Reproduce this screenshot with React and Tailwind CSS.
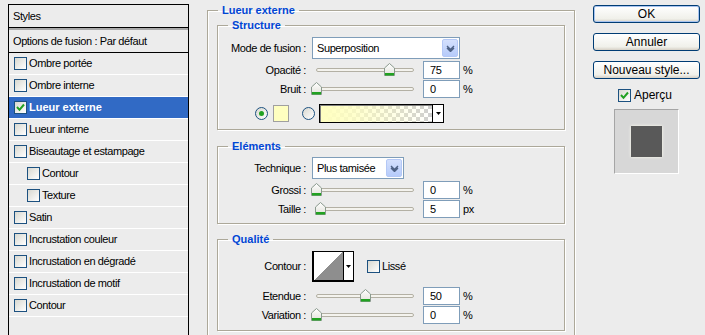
import React from "react";

const styleRows = [
  { label: "Ombre portée" },
  { label: "Ombre interne" },
  { label: "Lueur externe", on: true },
  { label: "Lueur interne" },
  { label: "Biseautage et estampage" },
  { label: "Contour", sub: true },
  { label: "Texture", sub: true },
  { label: "Satin" },
  { label: "Incrustation couleur" },
  { label: "Incrustation en dégradé" },
  { label: "Incrustation de motif" },
  { label: "Contour" },
];

function Check({ checked }) {
  return (
    <span className="flex h-[13px] w-[13px] shrink-0 items-center justify-center border border-[#1c5180] bg-[linear-gradient(135deg,#d8d8d0,#ffffff)]">
      {checked && (
        <svg width="9" height="9" viewBox="0 0 9 9">
          <path d="M1 4 L3.5 6.8 L8 1.5" fill="none" stroke="#21a121" strokeWidth="2" />
        </svg>
      )}
    </span>
  );
}

function Radio({ checked }) {
  return (
    <span className="flex h-[13px] w-[13px] shrink-0 items-center justify-center rounded-full border border-[#1c5180] bg-[linear-gradient(135deg,#d8d8d0,#ffffff)]">
      {checked && <span className="h-[5px] w-[5px] rounded-full bg-[#21a121]" />}
    </span>
  );
}

function Chevron() {
  return (
    <span className="flex h-full w-[16px] items-center justify-center rounded-[2px] border border-[#b4c8f6] bg-[linear-gradient(#d4e0fd,#b6cbfa)]">
      <svg width="9" height="7" viewBox="0 0 9 7">
        <path d="M1 1 L4.5 4.5 L8 1 M1 3 L4.5 6.5 L8 3" fill="none" stroke="#4d6185" strokeWidth="1.4" />
      </svg>
    </span>
  );
}

function Select({ value, w }) {
  return (
    <div className={`flex h-[22px] items-center border border-[#7f9db9] bg-white p-px ${w}`}>
      <span className="flex-1 pl-[3px]">{value}</span>
      <Chevron />
    </div>
  );
}

function Thumb() {
  return (
    <svg width="11" height="13" viewBox="0 0 11 13">
      <defs>
        <linearGradient id="tg" x1="0" y1="0" x2="0" y2="1">
          <stop offset="0" stopColor="#ffffff" />
          <stop offset="1" stopColor="#e2e2da" />
        </linearGradient>
      </defs>
      <path d="M5.5 0.5 L10.5 5 L10.5 12.5 L0.5 12.5 L0.5 5 Z" fill="url(#tg)" stroke="#8a9a8e" />
      <rect x="1" y="10" width="9" height="2.5" fill="#21a121" />
    </svg>
  );
}

function Slider({ value }) {
  return (
    <div className="relative h-[18px] w-[106px] shrink-0">
      <div className="absolute left-[4px] top-[7px] h-[4px] w-[98px] rounded-full border border-[#b3b0a4] bg-[#f4f3ee]" />
      <div className="absolute top-[2px]" style={{ left: 4 + value * 0.98 - 5.5 }}>
        <Thumb />
      </div>
    </div>
  );
}

function Field({ value }) {
  return (
    <div className="ml-[5px] flex h-[18px] w-[37px] items-center border border-[#7f9db9] bg-white pl-[6px]">
      {value}
    </div>
  );
}

function SliderRow({ label, value, unit = "%", className = "" }) {
  return (
    <div className={`flex h-[18px] items-center ${className}`}>
      <span className="w-[88px] text-right">{label}</span>
      <span className="w-[6px]" />
      <Slider value={value} />
      <Field value={value} />
      <span className="ml-[3px]">{unit}</span>
    </div>
  );
}

function Group({ title, className = "", children, outer }) {
  return (
    <fieldset
      className={`border border-[#aca899] shadow-[inset_1px_1px_0_#ffffff,1px_1px_0_#ffffff] ${className}`}
    >
      <legend
        className={`${outer ? "ml-[10px]" : "ml-[10px]"} px-[4px] text-[11px] font-bold leading-[14px] tracking-normal text-[#0046d5]`}
      >
        {title}
      </legend>
      {children}
    </fieldset>
  );
}

function XpButton({ children, primary }) {
  return (
    <div
      className={`flex h-[18px] items-center justify-center rounded-[3px] border border-[#003c74] bg-[linear-gradient(#ffffff,#f0f0ea_80%,#d6d0c5)] text-[12px] tracking-normal ${
        primary ? "shadow-[inset_0_0_0_1px_#a8c4f0]" : ""
      }`}
    >
      {children}
    </div>
  );
}

export default function App() {
  return (
    <div className="flex h-[335px] w-[705px] overflow-hidden bg-[#ececec] font-['Liberation_Sans',Arial,sans-serif] text-[11px] tracking-[-0.4px] text-black">
      {/* style list */}
      <div className="ml-[8px] mt-[4px] h-[340px] w-[181px] shrink-0 border border-black">
        <div className="flex h-[23px] items-center border-b border-black pl-[4px]">Styles</div>
        <div className="flex h-[25px] items-center border-b border-t-2 border-b-black border-t-[#a9a9a9] pl-[4px]">
          Options de fusion : Par défaut
        </div>
        {styleRows.map((r, i) => (
          <div
            key={i}
            className={`flex h-[22px] items-center gap-[2px] border-b border-white ${r.sub ? "pl-[18px]" : "pl-[5px]"} ${
              r.on ? "bg-[#316ac5] font-bold tracking-normal text-white" : ""
            }`}
          >
            <Check checked={r.on} />
            <span>{r.label}</span>
          </div>
        ))}
      </div>

      {/* settings */}
      <div className="ml-[18px] mt-[3px] w-[368px] shrink-0">
        <Group title="Lueur externe" outer className="h-[400px]">
          <Group title="Structure" className="mx-[9px] mt-px pb-[6px]">
            <div className="mt-[5px] flex items-center">
              <span className="w-[88px] text-right">Mode de fusion :</span>
              <span className="w-[6px]" />
              <Select value="Superposition" w="w-[148px]" />
            </div>
            <SliderRow label="Opacité :" value={75} className="mt-[2px]" />
            <SliderRow label="Bruit :" value={0} className="mt-px" />
            <div className="ml-[37px] mt-[6px] flex h-[19px] items-center">
              <Radio checked />
              <span className="ml-[5px] h-[17px] w-[16px] border border-[#a0a0a0] bg-[#ffffc0]" />
              <span className="ml-[13px]">
                <Radio />
              </span>
              <div className="ml-[4px] flex h-[19px] w-[125px] border border-black">
                <div className="flex-1 bg-[conic-gradient(#cfcfcf_25%,#ffffff_0_50%,#cfcfcf_0_75%,#ffffff_0)] bg-[length:8px_8px]">
                  <div className="h-full w-full border-l border-t border-[#808080] bg-[linear-gradient(to_right,#ffffc0,#ffffc0cc_30%,#ffffc000)]" />
                </div>
                <div className="flex w-[11px] items-center justify-center border-l border-black bg-white">
                  <svg width="5" height="3" viewBox="0 0 5 3">
                    <path d="M0 0 H5 L2.5 3 Z" fill="#000" />
                  </svg>
                </div>
              </div>
            </div>
          </Group>

          <Group title="Eléments" className="mx-[9px] mt-[9px] pb-[5px]">
            <div className="mt-[4px] flex items-center">
              <span className="w-[88px] text-right">Technique :</span>
              <span className="w-[6px]" />
              <Select value="Plus tamisée" w="w-[92px]" />
            </div>
            <SliderRow label="Grossi :" value={0} className="mt-[2px]" />
            <SliderRow label="Taille :" value={5} unit="px" className="mt-px" />
          </Group>

          <Group title="Qualité" className="mx-[9px] mt-[8px] pb-[6px]">
            <div className="mt-[5px] flex h-[31px] items-center">
              <span className="w-[88px] text-right">Contour :</span>
              <span className="w-[6px]" />
              <div className="flex h-[31px] w-[42px] border border-black border-b-2 border-l-2">
                <div className="flex-1 bg-[linear-gradient(to_top_left,#8e8e8e_50%,#ffffff_50%)]" />
                <div className="flex w-[10px] items-center justify-center border-l border-black bg-white">
                  <svg width="5" height="3" viewBox="0 0 5 3">
                    <path d="M0 0 H5 L2.5 3 Z" fill="#000" />
                  </svg>
                </div>
              </div>
              <span className="ml-[13px]">
                <Check />
              </span>
              <span className="ml-[2px]">Lissé</span>
            </div>
            <SliderRow label="Etendue :" value={50} className="mt-[5px]" />
            <SliderRow label="Variation :" value={0} className="mt-px" />
          </Group>
        </Group>
      </div>

      {/* buttons */}
      <div className="ml-[18px] w-[107px] shrink-0">
        <div className="mt-[5px]">
          <XpButton primary>OK</XpButton>
        </div>
        <div className="mt-[10px]">
          <XpButton>Annuler</XpButton>
        </div>
        <div className="mt-[10px]">
          <XpButton>Nouveau style...</XpButton>
        </div>
        <div className="ml-[25px] mt-[9px] flex h-[14px] items-center gap-[3px] text-[12px] tracking-normal">
          <Check checked />
          <span>Aperçu</span>
        </div>
        <div className="ml-[21px] mt-[7px] flex h-[65px] w-[65px] items-center justify-center border border-[#a5a5a5] border-b-white border-r-white bg-[#d7d7d7]">
          <div className="h-[31px] w-[31px] bg-[#595959] shadow-[0_0_3px_#fffff0]" />
        </div>
      </div>
    </div>
  );
}
